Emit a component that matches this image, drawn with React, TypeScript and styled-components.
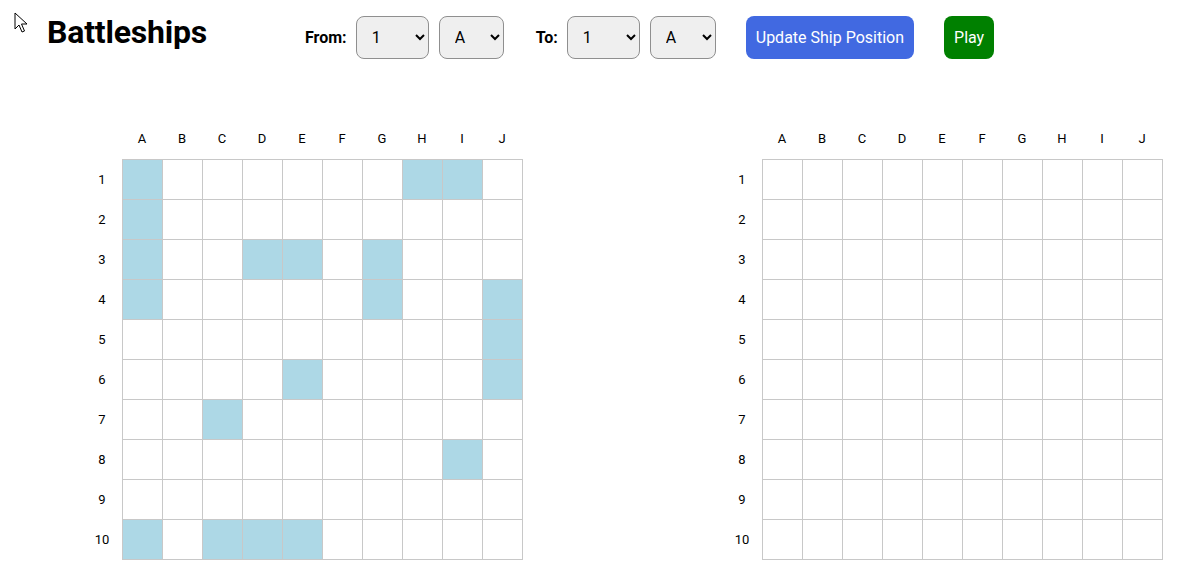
import React from 'react';
import styled, { createGlobalStyle } from 'styled-components';

const GlobalStyle = createGlobalStyle`
  body {
    margin: 0;
    font-family: Roboto, "Liberation Sans", Arial, sans-serif;
    background: #ffffff;
    color: #000000;
  }
`;

const ROWS = Array.from({ length: 10 }, (_, i) => i + 1);
const COLS = ['A', 'B', 'C', 'D', 'E', 'F', 'G', 'H', 'I', 'J'];

// placed ships on the player's board, "row-col"
const SHIPS = new Set([
  '1-A', '1-H', '1-I',
  '2-A',
  '3-A', '3-D', '3-E', '3-G',
  '4-A', '4-G', '4-J',
  '5-J',
  '6-E', '6-J',
  '7-C',
  '8-I',
  '10-A', '10-C', '10-D', '10-E',
]);

const Page = styled.div`
  position: relative;
  min-height: 100vh;
`;

const Cursor = styled.svg`
  position: absolute;
  left: 14px;
  top: 12px;
  pointer-events: none;
`;

const Header = styled.header`
  display: flex;
  align-items: center;
  padding: 16px 0 0 47px;
`;

const Title = styled.h1`
  margin: -3px 0 0 0;
  align-self: flex-start;
  font-size: 32px;
  font-weight: 700;
  letter-spacing: -0.2px;
`;

const Controls = styled.div`
  display: flex;
  align-items: center;
  margin-left: 98px;
`;

const Group = styled.div<{ $after: number }>`
  display: flex;
  align-items: center;
  gap: 10px;
  margin-right: ${(p) => p.$after}px;
`;

const Label = styled.label`
  font-size: 16px;
  font-weight: 700;
  margin-right: -1px;
`;

const Select = styled.select<{ $w: number }>`
  width: ${(p) => p.$w}px;
  height: 43px;
  padding: 0 8px 0 11px;
  font-family: inherit;
  font-size: 16px;
  color: #000;
  background-color: #efefef;
  border: 1px solid #8f8f8f;
  border-radius: 8px;
`;

const Button = styled.button<{ $bg: string }>`
  height: 43px;
  padding: 0 10px 1px;
  margin-right: 30px;
  font-family: inherit;
  font-size: 16px;
  color: #ffffff;
  background: ${(p) => p.$bg};
  border: none;
  border-radius: 8px;
`;

const Boards = styled.main`
  display: flex;
  gap: 199px;
  padding: 60px 0 0 82px;
`;

const Board = styled.div`
  display: grid;
  grid-template-columns: 40px 401px;
  grid-template-rows: 40px 401px;
`;

const ColHeads = styled.div`
  grid-column: 2;
  display: grid;
  grid-template-columns: repeat(10, 40px);
  padding-bottom: 2px;
`;

const RowHeads = styled.div`
  grid-row: 2;
  display: grid;
  grid-template-rows: repeat(10, 40px);
  padding-bottom: 2px;
`;

const Head = styled.div`
  display: flex;
  align-items: center;
  justify-content: center;
  font-size: 13px;
  color: #000;
`;

const Cells = styled.div`
  display: grid;
  grid-template-columns: repeat(10, 40px);
  grid-template-rows: repeat(10, 40px);
  border-top: 1px solid #c8c8c8;
  border-left: 1px solid #c8c8c8;
`;

const Cell = styled.div<{ $ship?: boolean }>`
  box-sizing: border-box;
  border-right: 1px solid #c8c8c8;
  border-bottom: 1px solid #c8c8c8;
  background: ${(p) => (p.$ship ? '#add8e6' : '#ffffff')};
`;

const Grid: React.FC<{ ships?: Set<string> }> = ({ ships }) => (
  <Board>
    <ColHeads>
      {COLS.map((c) => (
        <Head key={c}>{c}</Head>
      ))}
    </ColHeads>
    <RowHeads>
      {ROWS.map((r) => (
        <Head key={r}>{r}</Head>
      ))}
    </RowHeads>
    <Cells>
      {ROWS.map((r) =>
        COLS.map((c) => <Cell key={`${r}-${c}`} $ship={ships?.has(`${r}-${c}`)} />)
      )}
    </Cells>
  </Board>
);

const App: React.FC = () => {
  return (
    <Page>
      <GlobalStyle />
      <Cursor width="14" height="22" viewBox="0 0 14 22">
        <path
          d="M1 1 L1 17 L5 13 L8 20 L10.5 19 L7.5 12 L13 12 Z"
          fill="#ffffff"
          stroke="#000000"
          strokeWidth="1"
          strokeLinejoin="round"
        />
      </Cursor>
      <Header>
        <Title>Battleships</Title>
        <Controls>
          <Group $after={32}>
            <Label>From:</Label>
            <Select $w={73} defaultValue="1">
              {ROWS.map((r) => (
                <option key={r}>{r}</option>
              ))}
            </Select>
            <Select $w={65} defaultValue="A">
              {COLS.map((c) => (
                <option key={c}>{c}</option>
              ))}
            </Select>
          </Group>
          <Group $after={30}>
            <Label>To:</Label>
            <Select $w={73} defaultValue="1">
              {ROWS.map((r) => (
                <option key={r}>{r}</option>
              ))}
            </Select>
            <Select $w={66} defaultValue="A">
              {COLS.map((c) => (
                <option key={c}>{c}</option>
              ))}
            </Select>
          </Group>
          <Button $bg="#4169e1">Update Ship Position</Button>
          <Button $bg="#008000">Play</Button>
        </Controls>
      </Header>
      <Boards>
        <Grid ships={SHIPS} />
        <Grid />
      </Boards>
    </Page>
  );
};

export default App;
